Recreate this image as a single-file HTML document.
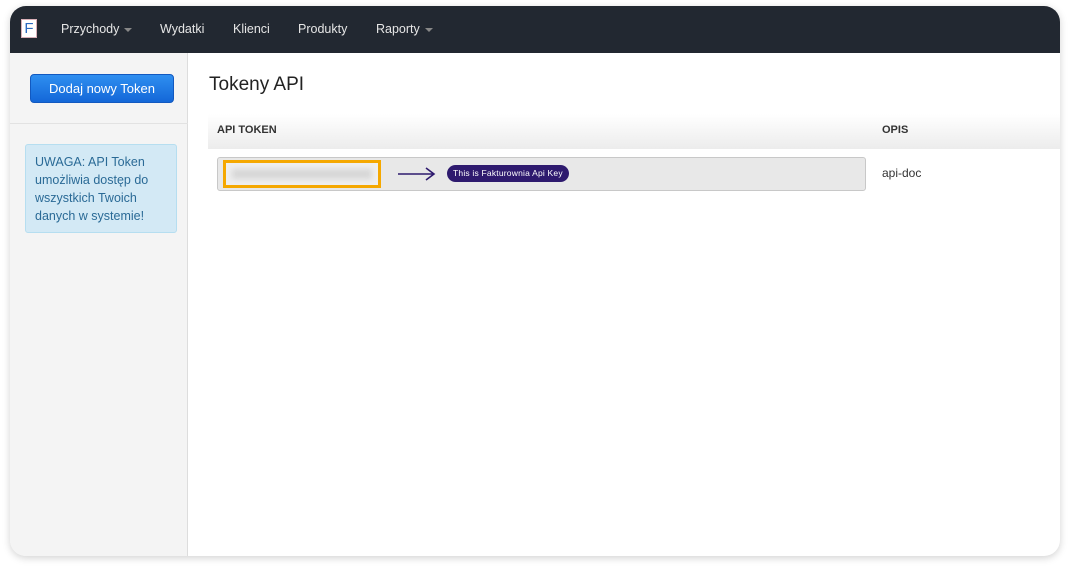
<!DOCTYPE html>
<html><head><meta charset="utf-8"><style>
*{margin:0;padding:0;box-sizing:border-box}
body{width:1070px;height:570px;background:#fff;font-family:"Liberation Sans",sans-serif;position:relative;overflow:hidden}
.win{position:absolute;left:10px;top:6px;width:1050px;height:550px;border-radius:16px;overflow:hidden;background:#fff;box-shadow:0 2px 8px rgba(0,0,0,.18)}
.nav{position:absolute;left:0;top:0;width:100%;height:47px;background:#222831}
.logo{position:absolute;left:11px;top:13px;width:16px;height:19px;background:#fff;border:1px solid #d9b0b8;color:#2a6ac0;font-size:15px;line-height:18px;text-align:center}
.nav span{position:absolute;top:16px;color:#e6e6e6;font-size:12.5px}
.car{display:inline-block;width:0;height:0;border-left:4px solid transparent;border-right:4px solid transparent;border-top:4px solid #888;margin-left:5px;vertical-align:middle}
.side{position:absolute;left:0;top:47px;width:178px;height:503px;background:#f4f4f4;border-right:1px solid #ddd}
.btn{position:absolute;left:20px;top:21px;width:144px;height:29px;border-radius:4px;background:linear-gradient(#2f8ff0,#1467d8);border:1px solid #1259c0;color:#fff;font-size:13px;text-align:center;line-height:27px}
.hr{position:absolute;left:0;top:70px;width:178px;height:1px;background:#e2e2e2}
.alert{position:absolute;left:15px;top:91px;width:152px;height:89px;background:#d3e9f5;border:1px solid #b6def0;border-radius:3px;color:#2a6a96;font-size:12.5px;line-height:18px;padding:8px 9px}
h1{position:absolute;left:199px;top:68px;font-size:19px;font-weight:normal;color:#222}
.th{position:absolute;left:198px;top:108px;width:852px;height:35px;background:linear-gradient(#fff,#ececec);font-size:11px;font-weight:bold;color:#333}
.th b{position:absolute;top:10px}
.inp{position:absolute;left:207px;top:151px;width:649px;height:34px;background:#e8e8e8;border:1px solid #c8c8c8;border-radius:3px}
.org{position:absolute;left:5px;top:2px;width:158px;height:28px;border:3px solid #f5a800;background:#efefef}
.blur{position:absolute;left:6px;top:6px;width:140px;height:10px;background:#d6d6d6;filter:blur(3px)}
.tag{position:absolute;left:229px;top:7px;background:#2e1a6e;color:#fff;font-size:8.5px;letter-spacing:.2px;border-radius:9px;padding:4px 6px;line-height:9px}
.desc{position:absolute;left:872px;top:160px;font-size:12px;color:#333}
</style></head><body>
<div class="win">
<div class="nav"><div class="logo">F</div>
<span style="left:51px">Przychody<i class="car"></i></span>
<span style="left:150px">Wydatki</span>
<span style="left:223px">Klienci</span>
<span style="left:288px">Produkty</span>
<span style="left:366px">Raporty<i class="car"></i></span></div>
<div class="side"><div class="btn">Dodaj nowy Token</div><div class="hr"></div>
<div class="alert">UWAGA: API Token umożliwia dostęp do wszystkich Twoich danych w systemie!</div></div>
<h1>Tokeny API</h1>
<div class="th"><b style="left:9px">API TOKEN</b><b style="left:674px">OPIS</b></div>
<div class="inp"><div class="org"><div class="blur"></div></div>
<svg style="position:absolute;left:179px;top:8px" width="40" height="16"><path d="M1 8H36M29 2L37 8L29 14" stroke="#2e1a6e" stroke-width="1.6" fill="none"/></svg>
<div class="tag">This is Fakturownia Api Key</div></div>
<div class="desc">api-doc</div>
</div>
</body></html>
